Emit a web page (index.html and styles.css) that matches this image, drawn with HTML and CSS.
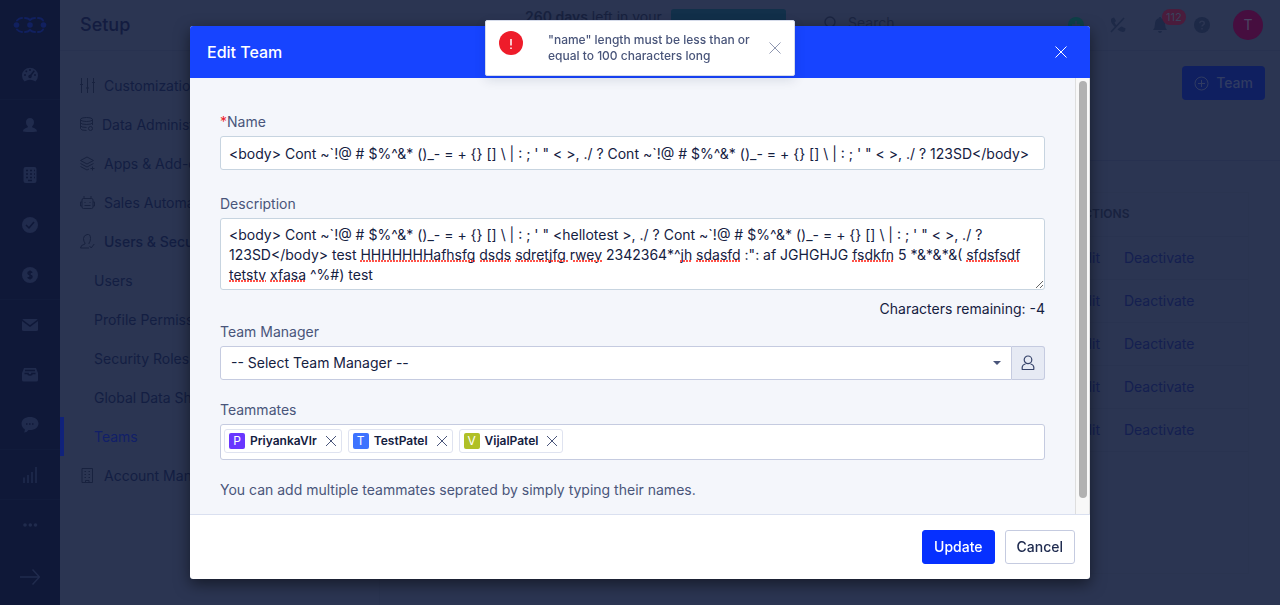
FILE: index.html
```html
<!DOCTYPE html>
<html lang="en">
<head>
<meta charset="utf-8">
<meta name="viewport" content="width=device-width, initial-scale=1">
<title>Setup - Teams</title>
<link rel="stylesheet" href="styles.css">
</head>
<body>
<div class="app">
  <nav class="rail" aria-label="Main">
    <a class="rail-item logo" href="#" aria-label="Home"><svg width="34" height="18" viewBox="0 0 34 18" fill="none" stroke="currentColor" stroke-width="2" stroke-linecap="round"><path d="M4 4.500Q6 2 9 2M12 2q3 0 5 2 2-2 5-2M25 2q4 0 5 2.500M4 13.500Q6 16 9 16M12 16q3 0 5-2 2 2 5 2M25 16q4 0 5-2.500"/><g fill="currentColor" stroke="none"><circle cx="3.500" cy="9" r="2.800"/><circle cx="17" cy="9" r="2.800"/><circle cx="30.500" cy="9" r="2.800"/></g></svg></a>
    <a class="rail-item ruled" href="#" aria-label="Dashboard"><svg width="16" height="16" viewBox="0 0 16 16"><path fill="currentColor" d="M2.500 14.500A8 8 0 1 1 13.500 14.500Q8 11 2.500 14.500z"/><g class="cut"><path d="M8 2v2M3.700 3.700l1.200 1.200M2 8h2M12 8h2M12.300 3.700L8.300 9"/><circle cx="8" cy="9.500" r="1"/></g></svg></a>
    <a class="rail-item" href="#" aria-label="Contacts"><svg width="16" height="16" viewBox="0 0 16 16" fill="currentColor"><path d="M8 1c2.600 0 4 1.800 4 4.200 0 1.900-.8 3.200-1.800 4v1c1 .8 4.800 1 4.800 4.300Q8 15.500 1 14.500c0-3.300 3.800-3.500 4.800-4.300v-1C4.800 8.400 4 7.100 4 5.200 4 2.800 5.400 1 8 1z"/></svg></a>
    <a class="rail-item" href="#" aria-label="Companies"><svg width="16" height="18" viewBox="0 0 16 18"><rect x="1.500" y="1" width="13" height="16" rx="2" fill="currentColor"/><g class="cut"><path stroke-dasharray="2 2" d="M4 4.500h9M4 8h9M4 11.500h9"/><path d="M6 14.500h4"/></g></svg></a>
    <a class="rail-item" href="#" aria-label="Tasks"><svg width="16" height="16" viewBox="0 0 16 16"><circle cx="8" cy="8" r="8" fill="currentColor"/><path class="cut" d="M4 8l3 3 5-6"/></svg></a>
    <a class="rail-item ruled" href="#" aria-label="Deals"><svg width="16" height="16" viewBox="0 0 16 16"><circle cx="8" cy="8" r="8" fill="currentColor"/><path class="cut" d="M10 5.800C9.500 4.600 6 4.300 6 6.300 6 8.300 10 7.500 10 9.700c0 2-3.600 1.800-4.200.4M8 3.500v9"/></svg></a>
    <a class="rail-item" href="#" aria-label="Email"><svg width="16" height="12" viewBox="0 0 16 12"><rect width="16" height="12" rx="1.500" fill="currentColor"/><path class="cut" d="M0 1l8 6 8-6"/></svg></a>
    <a class="rail-item" href="#" aria-label="Inbox"><svg width="16" height="14" viewBox="0 0 16 14"><path fill="currentColor" d="M2 0h12l2 5v7q0 1.500-1.500 1.500h-13Q0 13.500 0 12V5z"/><path class="cut" d="M3 2.500h10M2.500 5.500H6Q6 7 8 7t2-1.500h3.500"/></svg></a>
    <a class="rail-item ruled" href="#" aria-label="Messages"><svg width="18" height="16" viewBox="0 0 18 16"><path fill="currentColor" d="M9 0c5 0 8.500 2.700 8.500 6.500S14 13 9 13H7.500Q6 15.500 3 15.500q1-1.500.8-3.200C1.500 11 .5 9 .5 6.500.5 2.700 4 0 9 0z"/><path class="cut" stroke-dasharray="1.500 1.500" d="M5 7h8"/></svg></a>
    <a class="rail-item ruled" href="#" aria-label="Reports"><svg width="16" height="16" viewBox="0 0 16 16" stroke="currentColor" stroke-width="1.500"><path d="M2 10.500V16M6 8v8M10 5v11M14 0v16"/></svg></a>
    <a class="rail-item" href="#" aria-label="More"><svg width="16" height="4" viewBox="0 0 16 4" fill="currentColor"><circle cx="3" cy="2" r="1.800"/><circle cx="8.300" cy="2" r="1.800"/><circle cx="13.500" cy="2" r="1.800"/></svg></a>
    <a class="rail-item expand" href="#" aria-label="Expand"><svg width="20" height="16" viewBox="0 0 20 16" fill="none" stroke="currentColor" stroke-width="1.500"><path d="M0 8h19.500M12.500.500L19.500 8l-7 7.500"/></svg></a>
  </nav>

  <div class="page">
    <header class="topbar">
      <h1 class="title">Setup</h1>
      <p class="trial"><strong>260 days</strong> left in your</p>
      <div class="upgrade"></div>
      <div class="search"><svg width="14" height="14" viewBox="0 0 14 14" fill="none" stroke="currentColor" stroke-width="1.300"><circle cx="6" cy="6" r="5"/><path d="M9.600 9.600L13.500 13.500"/></svg><span>Search</span></div>
      <div class="tools">
        <button class="tool add" aria-label="Add"><svg width="16" height="16" viewBox="0 0 16 16"><circle cx="8" cy="8" r="8" fill="currentColor"/><path d="M8 4v8M4 8h8" stroke="#2b3552" stroke-width="1.500"/></svg></button>
        <button class="tool" aria-label="Calls off"><svg width="16" height="16" viewBox="0 0 16 16"><path fill="currentColor" d="M1.500 1.500L4 .500l2 3.500-1.500 1.500q.8 1.800 2 3l-1.500 1.500Q-.5 5 1.500 1.500zM9 11l2.500-1.500 4 2-.5 2.500q-2.500 2.500-7.500-1.500z"/><path stroke="currentColor" stroke-width="1.500" d="M14 1L1 15"/></svg></button>
        <button class="tool bell" aria-label="Notifications"><svg width="16" height="16" viewBox="0 0 16 16" fill="currentColor"><path d="M8 0q1.200 0 1.200 1.200Q13 2.300 13 7q0 4 2 6H1q2-2 2-6 0-4.700 3.800-5.800Q6.800 0 8 0zM6 14h4q-.5 2-2 2t-2-2z"/></svg><span class="count">112</span></button>
        <button class="tool" aria-label="Help"><svg width="16" height="16" viewBox="0 0 16 16"><circle cx="8" cy="8" r="8" fill="currentColor"/><path class="mark" d="M5.800 6.200C5.800 3.500 10.300 3.700 10.300 6.200 10.300 7.800 8 7.800 8 9.500M8 11v1.500"/></svg></button>
        <button class="avatar">T</button>
      </div>
    </header>
    <div class="columns">
      <aside class="menu">
        <a class="menu-item" href="#"><svg width="15" height="15" viewBox="0 0 15 15"><path d="M1.500 0v15M7.500 0v15M13.500 0v15M0 6.500h3M6 10h3M12 4.500h3"/></svg>Customizations</a>
        <a class="menu-item" href="#"><svg width="13" height="15" viewBox="0 0 13 15"><ellipse cx="6.500" cy="2.500" rx="6" ry="2"/><path d="M.5 2.500v9q0 2 6 2M12.500 2.500V8M.5 5.500q0 2 6 2t6-2M.5 8.500q0 2 6 2"/><circle cx="10.500" cy="11.500" r="2"/></svg>Data Administration</a>
        <a class="menu-item" href="#"><svg width="15" height="15" viewBox="0 0 15 15"><path d="M7 1l6.500 3.500L7 8 .5 4.500zM.5 7.500L7 11l6.500-3.500M.5 10.500L7 14l2-1M12.500 10.500v4M10.500 12.500h4"/></svg>Apps &amp; Add-ons</a>
        <a class="menu-item" href="#"><svg width="15" height="15" viewBox="0 0 15 15"><rect x="2" y="3.500" width="11" height="10" rx="1.500"/><path d="M4 3.500V1M11 3.500V1M2 7H.500v4H2M13 7h1.500v4H13M4.500 7.500h1M9.500 7.500h1M4.500 10.500h6"/></svg>Sales Automation</a>
        <a class="menu-item strong" href="#"><svg width="15" height="15" viewBox="0 0 15 15"><path d="M9 14H.500q0-3 4.500-4V9Q3.500 7.500 3.500 4.500T7 .500t3.500 4Q10.500 7.500 9 9v1M9.500 12l1.700 2 3-4"/></svg>Users &amp; Security</a>
        <a class="menu-item sub" href="#">Users</a>
        <a class="menu-item sub" href="#">Profile Permissions</a>
        <a class="menu-item sub" href="#">Security Roles</a>
        <a class="menu-item sub" href="#">Global Data Sharing</a>
        <a class="menu-item sub current" href="#">Teams</a>
        <a class="menu-item" href="#"><svg width="15" height="15" viewBox="0 0 15 15"><path d="M2 .500h10.500v14H2zM5.500 14.500V12.500h3.500v2M4.500 3.500h1.500M8.500 3.500h1.500M4.500 6.500h1.500M8.500 6.500h1.500M4.500 9.500h1.500M8.500 9.500h1.500"/></svg>Account Management</a>
      </aside>
      <main class="content">
        <div class="actions-bar">
          <button class="new-team"><svg width="15" height="15" viewBox="0 0 15 15" fill="none" stroke="currentColor"><circle cx="7.500" cy="7.500" r="6.500"/><path d="M7.500 4v7M4 7.500h7"/></svg>Team</button>
        </div>
        <div class="panel">
          <table class="teams">
            <thead><tr><th>ACTIONS</th></tr></thead>
            <tbody>
              <tr><td><a href="#">Edit</a><a href="#">Deactivate</a></td></tr>
              <tr><td><a href="#">Edit</a><a href="#">Deactivate</a></td></tr>
              <tr><td><a href="#">Edit</a><a href="#">Deactivate</a></td></tr>
              <tr><td><a href="#">Edit</a><a href="#">Deactivate</a></td></tr>
              <tr><td><a href="#">Edit</a><a href="#">Deactivate</a></td></tr>
            </tbody>
          </table>
        </div>
      </main>
    </div>
  </div>
</div>

<div class="overlay">
  <form class="modal" role="dialog" aria-labelledby="modal-title">
    <div class="modal-head">
      <h2 id="modal-title">Edit Team</h2>
      <button type="button" class="close" aria-label="Close"><svg width="12" height="12" viewBox="0 0 12 12"><path d="M.5.500l11 11M11.500.500l-11 11"/></svg></button>
    </div>
    <div class="modal-main">
      <div class="modal-body">
        <div class="field">
          <label for="name"><span class="required">*</span>Name</label>
          <input id="name" class="control" type="text" spellcheck="false" value="&lt;body&gt; Cont ~`!@ # $%^&amp;* ()_- = + {} [] \ | : ; ' &quot; &lt; &gt;, ./ ? Cont ~`!@ # $%^&amp;* ()_- = + {} [] \ | : ; ' &quot; &lt; &gt;, ./ ? 123SD&lt;/body&gt;">
        </div>
        <div class="field description">
          <label for="description">Description</label>
          <div class="spelled">
            <textarea id="description" class="control" rows="3" spellcheck="false">&lt;body&gt; Cont ~`!@ # $%^&amp;* ()_- = + {} [] \ | : ; ' " &lt;hellotest &gt;, ./ ? Cont ~`!@ # $%^&amp;* ()_- = + {} [] \ | : ; ' " &lt; &gt;, ./ ? 123SD&lt;/body&gt; test HHHHHHHafhsfg dsds sdretjfg rwey 2342364*^jh sdasfd :": af JGHGHJG fsdkfn 5 *&amp;*&amp;*&amp;( sfdsfsdf tetstv xfasa ^%#) test</textarea>
            <svg class="spelling" width="825" height="72" viewBox="0 0 825 72" aria-hidden="true"><path d="M140 43h115M260 43h31M295 43h54M353 43h30M460 43h11M476 43h44M632 43h42M746 43h54M9 63h37M50 63h35"/></svg>
          </div>
          <p class="remaining">Characters remaining: -4</p>
        </div>
        <div class="field manager">
          <label for="manager">Team Manager</label>
          <div class="picker">
            <div class="select-wrap">
              <select id="manager" class="control"><option>-- Select Team Manager --</option></select>
              <svg class="caret" width="8" height="4" viewBox="0 0 8 4"><path d="M0 0h8L4 4z"/></svg>
            </div>
            <button type="button" class="person" aria-label="Choose person"><svg width="14" height="16" viewBox="0 0 14 16"><circle cx="7" cy="4.800" r="3.800"/><path d="M1.200 14.500V12q.5-2.500 3.300-3M12.800 14.500V12q-.5-2.500-3.300-3M.8 14.500h12.400"/></svg></button>
          </div>
        </div>
        <div class="field mates">
          <label for="mates">Teammates</label>
          <div class="control tags">
            <span class="tag"><span class="initial violet">P</span>PriyankaVlr<button type="button" aria-label="Remove PriyankaVlr"><svg width="12" height="12" viewBox="0 0 12 12"><path d="M1 1l10 10M11 1L1 11"/></svg></button></span>
            <span class="tag"><span class="initial blue">T</span>TestPatel<button type="button" aria-label="Remove TestPatel"><svg width="12" height="12" viewBox="0 0 12 12"><path d="M1 1l10 10M11 1L1 11"/></svg></button></span>
            <span class="tag"><span class="initial olive">V</span>VijalPatel<button type="button" aria-label="Remove VijalPatel"><svg width="12" height="12" viewBox="0 0 12 12"><path d="M1 1l10 10M11 1L1 11"/></svg></button></span>
            <input id="mates" type="text">
          </div>
        </div>
        <p class="hint">You can add multiple teammates seprated by simply typing their names.</p>
      </div>
      <div class="scrollbar"><div class="thumb"></div></div>
    </div>
    <div class="modal-foot">
      <button type="button" class="btn primary">Update</button>
      <button type="button" class="btn">Cancel</button>
    </div>
  </form>
</div>

<div class="toast" role="alert">
  <svg class="alert-icon" width="24" height="24" viewBox="0 0 24 24"><circle cx="12" cy="12" r="12" fill="#ee1c2a"/><path d="M12 8v6.500M12 16.500v1.500" stroke="#fff" stroke-width="1.500"/></svg>
  <p>"name" length must be less than or equal to 100 characters long</p>
  <button type="button" class="close" aria-label="Dismiss"><svg width="12" height="12" viewBox="0 0 12 12"><path d="M.5.500l11 11M11.500.500l-11 11"/></svg></button>
</div>
</body>
</html>
```
FILE: styles.css
```css
* { box-sizing: border-box; }

body {
  margin: 0;
  font: 14px/20px Inter, "Liberation Sans", sans-serif;
  color: #14203f;
  background: #2b3552;
  overflow: hidden;
}

h1, h2, p { margin: 0; font-weight: 500; }
a { color: inherit; text-decoration: none; }
button, input, select, textarea { font: inherit; color: inherit; margin: 0; }
button { border: 0; padding: 0; background: none; cursor: pointer; }
svg { display: block; flex: none; }

/* Application shell */
.app { display: flex; min-height: 100vh; }

.rail { width: 60px; flex: none; background: #0f1838; color: #202b4d; }
.rail-item { height: 50px; display: grid; place-items: center; }
.rail-item.logo { color: #11205f; }
.rail-item.ruled { box-shadow: inset 0 -1px #111b3b; }
.rail-item.expand { height: 54px; }
.rail .cut { fill: none; stroke: #0f1838; stroke-width: 1.5; }

.page { flex: 1; min-width: 0; display: flex; flex-direction: column; }
.topbar {
  height: 51px;
  display: flex;
  align-items: flex-start;
  border-bottom: 1px solid #283250;
  padding: 0 17px 0 20px;
}
.title { width: 445px; font-size: 18px; line-height: 50px; color: #131c40; }
.trial { width: 146px; padding-top: 7px; font-weight: 400; color: #18223f; }
.trial strong { font-weight: 600; }
.upgrade { width: 115px; height: 32px; margin-top: 9px; border-radius: 3px; background: #12304a; }
.search { display: flex; align-items: center; gap: 10px; padding: 13px 0 0 38px; color: #1b2542; }
.tools { margin-left: auto; height: 49px; display: flex; align-items: center; gap: 26px; }
.tool { color: #1d2947; }
.tool.add { color: #0e4048; }
.tool .mark { fill: none; stroke: #2b3552; stroke-width: 1.5; }
.bell { position: relative; }
.count {
  position: absolute;
  left: 10px;
  bottom: 8px;
  padding: 0 4px;
  border-radius: 8px;
  background: #4a1c3c;
  color: #39425c;
  font-size: 11px;
  line-height: 16px;
}
.avatar { width: 30px; height: 30px; border-radius: 50%; background: #460e3f; color: #4a4562; margin-left: -3px; }

.columns { flex: 1; display: flex; }
.menu { width: 320px; flex: none; border-right: 1px solid #293350; padding-top: 15px; }
.menu-item { display: flex; align-items: center; gap: 9px; height: 39px; padding-left: 20px; color: #131e42; }
.menu-item svg { fill: none; stroke: #18223f; }
.menu-item.strong { font-weight: 500; }
.menu-item.sub { padding-left: 34px; }
.menu-item.current { color: #111f68; border-left: 4px solid #10227a; padding-left: 30px; }

.content { flex: 1; display: flex; flex-direction: column; }
.actions-bar { height: 110px; padding: 15px 15px 0; display: flex; justify-content: flex-end; border-bottom: 1px solid #273150; }
.new-team {
  height: 34px;
  padding: 0 12px;
  display: flex;
  align-items: center;
  gap: 7px;
  border-radius: 4px;
  background: #0f1f60;
  color: #303b62;
  font-weight: 500;
}
.panel { flex: 1; margin: 31px 31px 31px 30px; border: 1px solid #2a3450; }
.teams { width: 100%; border-collapse: collapse; }
.teams th, .teams td { height: 43px; padding: 0 0 0 664px; text-align: left; border-bottom: 1px solid #293350; }
.teams th { font-size: 12px; font-weight: 600; color: #18223f; }
.teams td { color: #141f50; white-space: nowrap; }
.teams td a { margin-right: 24px; }

/* Dialog */
.overlay { position: fixed; inset: 0; padding: 26px; display: flex; justify-content: center; }
.modal {
  width: 900px;
  max-width: 100%;
  display: flex;
  flex-direction: column;
  border-radius: 3px;
  overflow: hidden;
  background: #fff;
  box-shadow: 0 5px 15px rgba(0, 0, 0, .5);
}
.modal-head {
  display: flex;
  align-items: center;
  justify-content: space-between;
  padding: 16px 23px 16px 17px;
  background: #1744ff;
  color: #fff;
}
.modal-head h2 { font-size: 16px; line-height: 20px; }
.close svg { fill: none; stroke: currentColor; }

.modal-main { flex: 1; min-height: 0; display: flex; }
.modal-body { flex: 1; min-width: 0; overflow-y: auto; scrollbar-width: none; padding: 34px 30px; background: #f4f6fb; }
.scrollbar {
  width: 15px;
  flex: none;
  padding: 3px 2px 3px 3px;
  border: 1px solid #dedede;
  border-width: 0 1px;
  background: #f8f8f8;
}
.thumb { width: 8px; height: 97%; border-radius: 4px; background: #b1b1b1; }

label { display: block; margin-bottom: 4px; color: #49557a; }
.required { color: #ee1c2a; }
.field { margin-bottom: 24px; }
.control {
  display: block;
  width: 100%;
  border: 1px solid #c7d4e0;
  border-radius: 3px;
  padding: 6px 8px;
  background: #fff;
  outline: 0;
}
input.control { height: 34px; }

.spelled { position: relative; }
.spelled textarea { height: 72px; resize: vertical; overflow: hidden; }
.spelling { position: absolute; left: 0; top: 0; pointer-events: none; fill: none; stroke: #ff5249; stroke-width: 2; stroke-dasharray: 2 1; }

.description { margin-bottom: 3px; }
.remaining { margin-top: 9px; text-align: right; font-weight: 400; }
.manager { margin-bottom: 20px; }
.picker { display: flex; }
.select-wrap { position: relative; flex: 1; }
.select-wrap select { appearance: none; height: 34px; padding: 0 10px; border-color: #c5cbe0; border-radius: 3px 0 0 3px; }
.caret { position: absolute; right: 11px; top: 15px; fill: #49557a; pointer-events: none; }
.person {
  width: 33px;
  display: grid;
  place-items: center;
  border: 1px solid #c5cbe0;
  border-left: 0;
  border-radius: 0 3px 3px 0;
  background: #e6eaf4;
}
.person svg { fill: none; stroke: #36436a; stroke-width: 1.2; }

.mates { margin-bottom: 20px; }
.tags { display: flex; flex-wrap: wrap; gap: 6px; min-height: 36px; padding: 4px 3px; border-color: #c5cbe0; }
.tags input { flex: 1; min-width: 40px; height: 24px; border: 0; padding: 0; outline: 0; background: none; }
.tag {
  height: 24px;
  display: flex;
  align-items: center;
  padding: 0 4px;
  border: 1px solid #dfe3f0;
  border-radius: 3px;
  background: #fff;
  font-size: 12px;
  font-weight: 600;
}
.tag button { margin-left: 8px; }
.tag button svg { fill: none; stroke: #49557a; }
.initial { width: 16px; margin-right: 5px; border-radius: 2px; color: #fff; font-weight: 400; line-height: 16px; text-align: center; }
.violet { background: #6936ff; }
.blue { background: #3d73ff; }
.olive { background: #b0c026; }
.hint { color: #49557a; font-weight: 400; }

.modal-foot { display: flex; justify-content: flex-end; gap: 10px; padding: 15px; border-top: 1px solid #dae0f0; }
.btn { height: 34px; padding: 0 11px; border: 1px solid #c5cbe0; border-radius: 3px; background: #fff; font-weight: 500; color: #202c50; }
.btn.primary { border-color: #0630ff; background: #0630ff; color: #fff; }

/* Error toast */
.toast {
  position: fixed;
  top: 20px;
  left: 0;
  right: 0;
  width: 310px;
  margin: 0 auto;
  padding: 11px 13px;
  display: flex;
  align-items: center;
  border: 1px solid #d5dbea;
  border-radius: 2px;
  background: #fff;
  box-shadow: 0 4px 12px rgba(20, 32, 63, .12);
  color: #49557a;
}
.alert-icon { align-self: flex-start; margin-top: -1px; }
.toast p { flex: 1; margin-left: 25px; font-size: 12px; line-height: 16px; }
.toast .close { color: #8f97b0; }
```
